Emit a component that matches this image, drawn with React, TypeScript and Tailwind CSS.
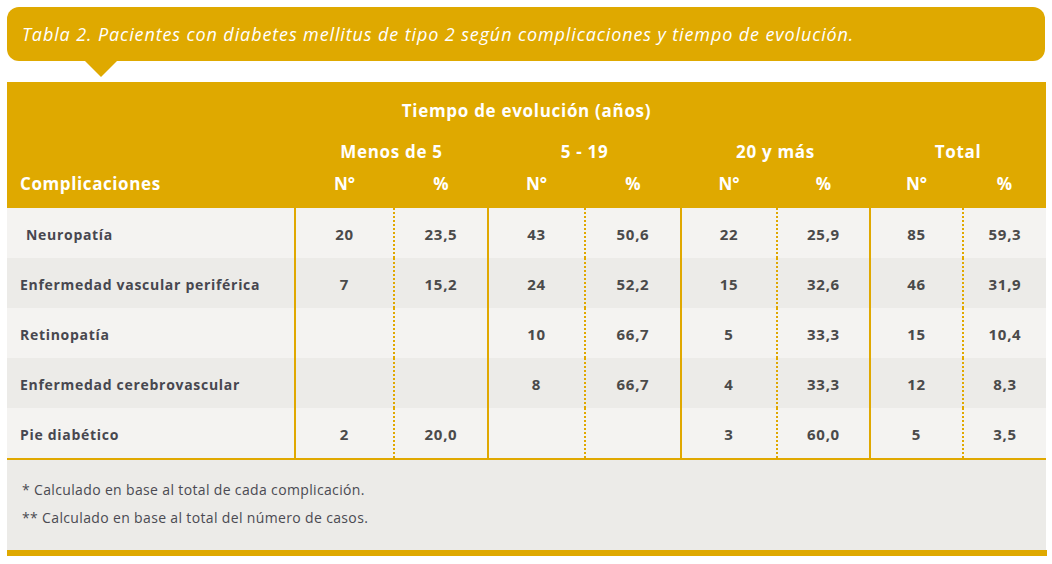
import React from 'react';

type Row = { name: string; cells: string[]; indent?: boolean };

const ROWS: Row[] = [
  { name: 'Neuropatía', cells: ['20', '23,5', '43', '50,6', '22', '25,9', '85', '59,3'], indent: true },
  { name: 'Enfermedad vascular periférica', cells: ['7', '15,2', '24', '52,2', '15', '32,6', '46', '31,9'] },
  { name: 'Retinopatía', cells: ['', '', '10', '66,7', '5', '33,3', '15', '10,4'] },
  { name: 'Enfermedad cerebrovascular', cells: ['', '', '8', '66,7', '4', '33,3', '12', '8,3'] },
  { name: 'Pie diabético', cells: ['2', '20,0', '', '', '3', '60,0', '5', '3,5'] },
];

const GROUPS = ['Menos de 5', '5 - 19', '20 y más', 'Total'];
const WIDTHS = [288, 99, 94, 97, 96, 96, 93, 93, 83];

const font = { fontFamily: '"Open Sans", "Noto Sans", sans-serif' };

export default function App() {
  return (
    <div className="bg-white w-[1052px] h-[564px] px-[7px] pt-[7px]" style={font}>
      {/* title bubble */}
      <div className="relative">
        <div className="bg-[#dfa900] rounded-[12px] h-[54px] flex items-center pl-[15px]">
          <p className="text-white italic text-[18px] tracking-[0.88px]">
            Tabla 2. Pacientes con diabetes mellitus de tipo 2 según complicaciones y tiempo de evolución.
          </p>
        </div>
        <div className="absolute left-[78px] top-[54px] w-0 h-0 border-l-[16px] border-r-[16px] border-t-[16px] border-l-transparent border-r-transparent border-t-[#dfa900]" />
      </div>

      <table className="mt-[21px] w-[1039px] border-collapse table-fixed">
        <colgroup>
          {WIDTHS.map((w, i) => (
            <col key={i} style={{ width: w }} />
          ))}
        </colgroup>
        <thead className="bg-[#dfa900] text-white font-bold">
          <tr>
            <th colSpan={9} className="h-[56px] text-[17px] tracking-[0.7px] text-center align-middle pt-[2px]">
              Tiempo de evolución (años)
            </th>
          </tr>
          <tr>
            <th />
            {GROUPS.map(g => (
              <th key={g} colSpan={2} className="h-[28px] text-[17px] tracking-[0.7px] text-center align-middle">
                {g}
              </th>
            ))}
          </tr>
          <tr>
            <th className="h-[42px] text-[17px] tracking-[0.6px] text-left pl-[13px] pb-[7px] align-middle">
              Complicaciones
            </th>
            {GROUPS.map(g => (
              <React.Fragment key={g}>
                <th className="text-[17px] text-center pb-[7px] align-middle">N°</th>
                <th className="text-[17px] text-center pb-[7px] align-middle">%</th>
              </React.Fragment>
            ))}
          </tr>
        </thead>
        <tbody className="text-[14px] font-bold text-[#4a4a4a] tracking-[0.7px]">
          {ROWS.map((r, i) => (
            <tr key={r.name} className={`h-[50px] ${i % 2 === 0 ? 'bg-[#f4f3f1]' : 'bg-[#ecebe8]'}`}>
              <td className={`text-left text-[#47474f] pt-[3px] ${r.indent ? 'pl-[19px]' : 'pl-[13px]'}`}>{r.name}</td>
              {r.cells.map((c, j) => (
                <td
                  key={j}
                  className={`text-center pt-[3px] text-[15px] border-[#e0a800] border-l-2 ${j % 2 === 0 ? 'border-solid' : 'border-dotted'}`}
                >
                  {c}
                </td>
              ))}
            </tr>
          ))}
        </tbody>
      </table>

      <div className="w-[1039px] border-t-2 border-[#e0a800] bg-[#ecebe8] h-[92px] flex flex-col justify-center gap-[7px] pl-[15px] pb-[4px] text-[14px] tracking-[0.35px] text-[#4a4a52]">
        <p>* Calculado en base al total de cada complicación.</p>
        <p>** Calculado en base al total del número de casos.</p>
      </div>
      <div className="w-[1040px] h-[6px] bg-[#dfa900]" />
    </div>
  );
}
